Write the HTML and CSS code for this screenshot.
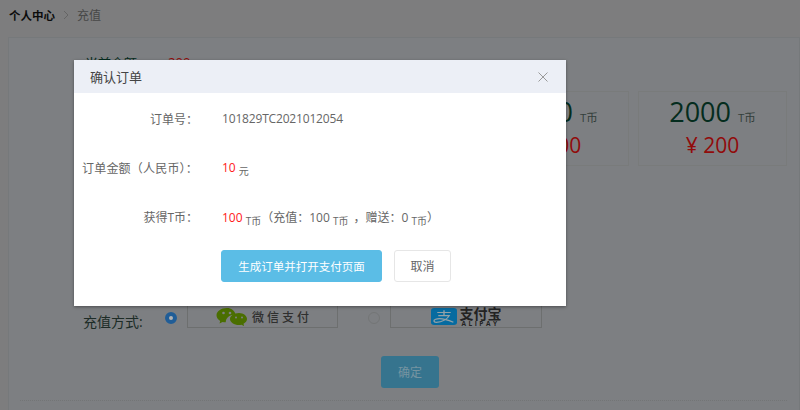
FILE: index.html
```html
<!DOCTYPE html>
<html lang="zh-CN">

<head>
    <meta charset="UTF-8">
    <meta name="viewport" content="width=device-width, initial-scale=1.0">
    <title>充值</title>
    <link rel="stylesheet" href="styles.css">
</head>

<body>
    <div class="crumbs">
        <b>个人中心</b>
        <svg class="crumb-sep" width="6" height="10" viewBox="0 0 6 10"><path d="M1 1l4 4-4 4" /></svg>
        <span>充值</span>
    </div>

    <div class="panel">
        <div class="balance">
            <span>当前余额：</span>
            <span class="balance-num">200</span>
        </div>

        <div class="cards">
            <div class="card">
                <div class="card-amount">100 <small>T币</small></div>
                <div class="card-price">¥ 10</div>
            </div>
            <div class="card">
                <div class="card-amount">500 <small>T币</small></div>
                <div class="card-price">¥ 50</div>
            </div>
            <div class="card">
                <div class="card-amount">1000 <small>T币</small></div>
                <div class="card-price">¥ 100</div>
            </div>
            <div class="card">
                <div class="card-amount">2000 <small>T币</small></div>
                <div class="card-price">¥ 200</div>
            </div>
        </div>

        <div class="pay-row">
            <span class="pay-label">充值方式:</span>
            <span class="radio checked"></span>
            <div class="pay-box wechat">
                <svg width="33" height="19" viewBox="0 0 33 19">
                    <path class="wx" d="M11 1C5 1 .5 4.300.5 8.300c0 2.400 1.500 4.300 3.700 5.600l-.7 2.600 3-1.600c1.100.3 2.200.4 3.300.4-.3-3.800 3.200-7.900 9.700-7.900C18.600 3.500 15.200 1 11 1z" />
                    <path class="wx" d="M23 7.500c-5 0-9 2.800-9 6 0 3.300 4 6 9 6 .9 0 1.700 0 2.500-.3l2.600 1.400-.6-2.300c2.100-1.200 3.500-2.900 3.500-4.800 0-3.200-3.500-6-8-6z" transform="translate(0 -1.500)" />
                    <circle class="eye" cx="7.500" cy="6" r="1.300" />
                    <circle class="eye" cx="14" cy="6" r="1.300" />
                    <circle class="eye" cx="20" cy="10.500" r="1" />
                    <circle class="eye" cx="26" cy="10.500" r="1" />
                </svg>
                <span class="wechat-name">微信支付</span>
            </div>
            <span class="radio"></span>
            <div class="pay-box alipay">
                <svg width="26" height="17" viewBox="0 0 25 19" preserveAspectRatio="none">
                    <rect width="25" height="19" rx="3" class="ali-bg" />
                    <path class="ali-line" d="M6 5h13M12.500 2.500V8M7 8.500h10.500C16 12 11 16 5 16c-2.500 0-3-2.500-.5-3.500 4-1.500 11 .5 17 3.500" />
                </svg>
                <div class="alipay-name">
                    <span class="ali-cn">支付宝</span>
                    <span class="ali-en">ALIPAY</span>
                </div>
            </div>
        </div>

        <div class="submit-row">
            <button class="btn-ok" type="button">确定</button>
        </div>
        <div class="dash-line"></div>
    </div>

    <div class="mask"></div>

    <div class="dialog">
        <div class="dialog-head">
            <span>确认订单</span>
            <svg class="dialog-close" width="10" height="10" viewBox="0 0 10 10"><path d="M.5.5l9 9M9.500.5l-9 9" /></svg>
        </div>
        <div class="dialog-body">
            <div class="row">
                <label>订单号：</label>
                <div class="order-no">101829TC2021012054</div>
            </div>
            <div class="row">
                <label class="label-wide">订单金额（人民币）：</label>
                <div><span class="red">10</span> <small>元</small></div>
            </div>
            <div class="row">
                <label>获得T币：</label>
                <div><span class="red">100</span> <small>T币</small>（充值：100 <small class="unit-gap">T币</small> ，赠送：0 <small>T币</small>）</div>
            </div>
            <div class="buttons">
                <button class="btn-primary" type="button">生成订单并打开支付页面</button>
                <button class="btn-cancel" type="button">取消</button>
            </div>
        </div>
    </div>
</body>

</html>
```

FILE: styles.css
```css
html, body {
    margin: 0;
    height: 410px;
    overflow: hidden;
}

body {
    position: relative;
    background: #b3b4b5;
    font-family: "Open Sans", "Noto Sans CJK SC", sans-serif;
    font-size: 12px;
    color: #333;
}

button {
    font-family: inherit;
}

.crumbs {
    height: 30px;
    padding-left: 9px;
    display: flex;
    align-items: center;
    gap: 8px;
    color: #666;
}

.crumbs b {
    font-size: 11.500px;
    color: #111;
}

.crumb-sep path {
    fill: none;
    stroke: #919191;
}

.panel {
    margin: 7px 0 0 8px;
    height: 380px;
    border: 1px solid #aaaeb1;
    background: #b4b7ba;
    box-sizing: border-box;
    padding: 15px 12px 0 0;
}

.balance {
    margin-left: 76px;
    height: 38px;
    display: flex;
    gap: 18px;
    font-size: 13px;
    color: #07402c;
}

.balance-num {
    color: #d01010;
}

.cards {
    display: flex;
    justify-content: flex-end;
    gap: 9px;
    height: 75px;
}

.card {
    width: 149px;
    box-sizing: border-box;
    border: 1px solid #aeb0b0;
    text-align: center;
}

.card-amount {
    font-size: 27px;
    line-height: 40px;
    color: #07402c;
}

.card-amount small {
    font-size: 11.500px;
    line-height: 1;
    color: #4a5a55;
}

.card-price {
    font-size: 21px;
    line-height: 26px;
    color: #d01010;
}

.pay-row {
    margin-top: 140px;
    margin-left: 74px;
    height: 22px;
    display: flex;
    align-items: flex-start;
    color: #2b4038;
    font-size: 14px;
}

.pay-label {
    width: 82px;
    line-height: 32px;
    white-space: nowrap;
}

.radio {
    box-sizing: border-box;
    width: 12px;
    height: 12px;
    margin-top: 6px;
    margin-right: 10px;
    border-radius: 50%;
    border: 1px solid #a5a8aa;
}

.radio.checked {
    border: 4px solid #2f86d8;
    background: #fff;
}

.pay-box {
    box-sizing: border-box;
    width: 151px;
    height: 22px;
    border: 1px solid #9da0a0;
    border-top: none;
    margin-right: 30px;
    display: flex;
    align-items: center;
    justify-content: center;
}

.pay-box.wechat {
    gap: 3px;
}

.wx {
    fill: #6a9e00;
}

.eye {
    fill: #b4b7ba;
}

.wechat-name {
    font-size: 12px;
    font-weight: 500;
    letter-spacing: 3px;
    margin-right: -3px;
    color: #444;
}

.alipay {
    width: 152px;
    gap: 3px;
}

.ali-bg {
    fill: #0a9ae6;
}

.ali-line {
    fill: none;
    stroke: #d5e8f0;
    stroke-width: 1.300;
}

.alipay-name {
    display: flex;
    flex-direction: column;
    align-items: center;
    color: #333;
}

.ali-cn {
    font-size: 14px;
    line-height: 13px;
    font-weight: 700;
}

.ali-en {
    font-size: 6.500px;
    font-weight: 700;
    line-height: 7px;
    letter-spacing: 2.500px;
}

.submit-row {
    margin-top: 28px;
    margin-left: 372px;
}

.btn-ok {
    width: 58px;
    height: 32px;
    border: none;
    border-radius: 3px;
    background: #4ea6cc;
    color: #a8d4e6;
    font-size: 12px;
    padding: 0;
}

.dash-line {
    margin: 12px 0 0 11px;
    border-top: 1px dotted #a5a8aa;
}

.mask {
    position: absolute;
    inset: 0;
    background: rgba(0, 0, 0, 0.3);
}

.dialog {
    position: absolute;
    left: 74px;
    top: 60px;
    width: 492px;
    height: 246px;
    background: #fff;
    box-shadow: 0 1px 3px rgba(0, 0, 0, 0.4);
    color: #666;
}

.dialog-head {
    height: 33px;
    padding: 0 18px 0 16px;
    background: #eceff6;
    display: flex;
    align-items: center;
    justify-content: space-between;
    font-size: 13px;
    color: #444;
}

.dialog-close path {
    stroke: #999;
    fill: none;
}

.dialog-body {
    padding-top: 1px;
}

.row {
    height: 49px;
    display: flex;
    align-items: center;
    gap: 24px;
    white-space: nowrap;
}

.row label {
    width: 124px;
    text-align: right;
}

.label-wide {
    letter-spacing: 0.200px;
}

.order-no {
    letter-spacing: -0.170px;
}

.row small {
    font-size: 10px;
    position: relative;
    top: 3px;
}

.unit-gap {
    margin-right: 2px;
}

.red {
    color: #ff2020;
}

.buttons {
    margin: 9px 0 0 147px;
    display: flex;
    gap: 12px;
}

.btn-primary {
    width: 161px;
    height: 32px;
    border: 1px solid #5bbde6;
    border-radius: 3px;
    background: #5bbde6;
    color: #fff;
    font-size: 11.500px;
    padding: 0;
}

.btn-cancel {
    width: 57px;
    height: 32px;
    border: 1px solid #e6e6e6;
    border-radius: 3px;
    background: #fff;
    color: #666;
    font-size: 12px;
    padding: 0;
}
```
